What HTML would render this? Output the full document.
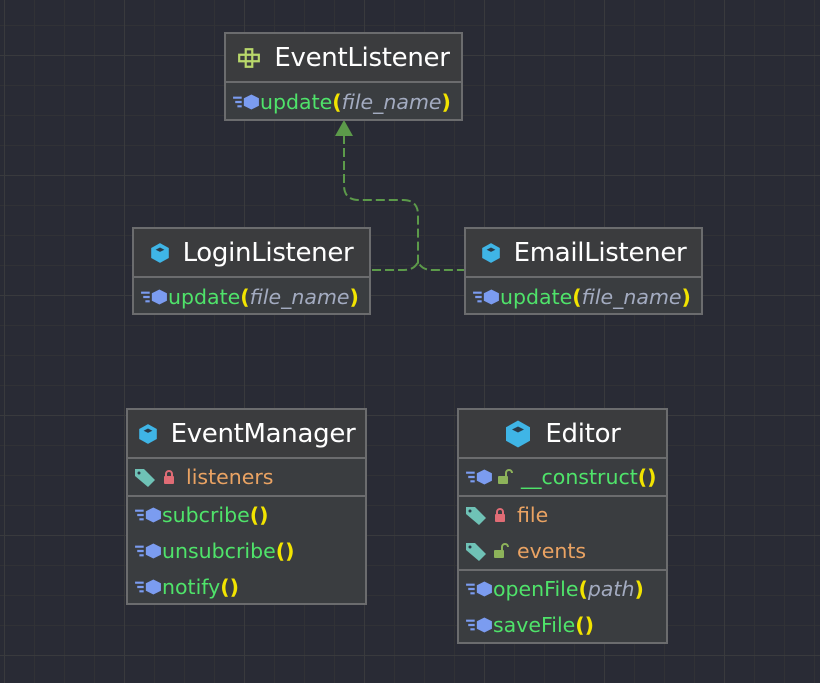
<!DOCTYPE html>
<html><head><meta charset="utf-8"><style>
body{margin:0;width:820px;height:683px;overflow:hidden;background:#292b35;
background-image:
linear-gradient(#393a3d 1px,transparent 1px),linear-gradient(90deg,#393a3d 1px,transparent 1px),
linear-gradient(#313236 1px,transparent 1px),linear-gradient(90deg,#313236 1px,transparent 1px);
background-size:120px 120px,120px 120px,30px 30px,30px 30px;
background-position:0 55px,4px 0,0 25px,4px 0;
font-family:"DejaVu Sans","Liberation Sans",sans-serif;position:relative}
.box{position:absolute;border:2px solid #6b6c6e;background:#3a3d40;box-sizing:border-box}
.hd{height:47px;border-bottom:2px solid #6b6c6e;background:#3b3c3e;color:#fff;font-size:26px;display:flex;align-items:center;justify-content:center;gap:13px;letter-spacing:-0.3px}
.row{height:36px;display:flex;align-items:center;padding-left:6px;font-size:20.5px;white-space:nowrap;letter-spacing:0px}
.sep{border-top:2px solid #6b6c6e}
.m{color:#4fe36a}.f{color:#eaa363}.p{color:#f2e400;font-weight:bold}.a{color:#a3abc0;font-style:italic}
svg{flex:none}
</style></head><body>
<svg width="820" height="683" style="position:absolute;left:0;top:0">
<path d="M344 135 V185 Q344 200 359 200 H403 Q418 200 418 215 V265" fill="none" stroke="#5c9a4a" stroke-width="2" stroke-dasharray="9 4"/>
<path d="M372 270 H404 Q414 270 418 262 Q422 270 432 270 H464" fill="none" stroke="#5c9a4a" stroke-width="2" stroke-dasharray="9 4"/>
<polygon points="344,120 335,136 353,136" fill="#5c9a4a"/>
</svg>

<div class="box" style="left:224px;top:32px;width:239px;height:89px">
<div class="hd"><svg width="24" height="20" viewBox="0 0 22 18"><path d="M8 1h6v5h6v6h-6v5H8v-5H2V6h6z M8 6h6v6H8z" fill="none" stroke="#b9d86b" stroke-width="2"/></svg>EventListener</div>
<div class="row" style="height:38px"><svg width="28" height="18" viewBox="0 0 26 16"><path d="M1 4h8M3 8h6M5 12h4" stroke="#7b9cf0" stroke-width="2"/><path d="M18 1l7 3.5v7L18 15l-7-3.5v-7z" fill="#7b9cf0"/></svg><span class="m">update</span><span class="p">(</span><span class="a">file_name</span><span class="p">)</span></div>
</div>

<div class="box" style="left:132px;top:227px;width:239px;height:88px">
<div class="hd"><svg width="20" height="22" viewBox="0 0 18 20"><path d="M9 1l8 4.5v9L9 19l-8-4.5v-9z" fill="#3fb5e6"/><path d="M5 7l4-2 4 2-4 2z" fill="#2a3a48"/></svg>LoginListener</div>
<div class="row" style="height:38px"><svg width="28" height="18" viewBox="0 0 26 16"><path d="M1 4h8M3 8h6M5 12h4" stroke="#7b9cf0" stroke-width="2"/><path d="M18 1l7 3.5v7L18 15l-7-3.5v-7z" fill="#7b9cf0"/></svg><span class="m">update</span><span class="p">(</span><span class="a">file_name</span><span class="p">)</span></div>
</div>

<div class="box" style="left:464px;top:227px;width:239px;height:88px">
<div class="hd"><svg width="20" height="22" viewBox="0 0 18 20"><path d="M9 1l8 4.5v9L9 19l-8-4.5v-9z" fill="#3fb5e6"/><path d="M5 7l4-2 4 2-4 2z" fill="#2a3a48"/></svg>EmailListener</div>
<div class="row" style="height:38px"><svg width="28" height="18" viewBox="0 0 26 16"><path d="M1 4h8M3 8h6M5 12h4" stroke="#7b9cf0" stroke-width="2"/><path d="M18 1l7 3.5v7L18 15l-7-3.5v-7z" fill="#7b9cf0"/></svg><span class="m">update</span><span class="p">(</span><span class="a">file_name</span><span class="p">)</span></div>
</div>

<div class="box" style="left:126px;top:408px;width:241px;height:197px">
<div class="hd"><svg width="20" height="22" viewBox="0 0 18 20"><path d="M9 1l8 4.5v9L9 19l-8-4.5v-9z" fill="#3fb5e6"/><path d="M5 7l4-2 4 2-4 2z" fill="#2a3a48"/></svg>EventManager</div>
<div class="row"><svg width="22" height="20" viewBox="0 0 22 20" style="margin-right:6px"><path d="M1 2h9l11 11-7 7L1 9z" fill="#6fc2b6"/><circle cx="5" cy="6" r="1.5" fill="#2a3a48"/></svg><svg width="14" height="16" viewBox="0 0 14 16" style="margin-right:10px"><path d="M4 7V5a3 3 0 016 0v2" stroke="#e06c75" stroke-width="2" fill="none"/><rect x="2" y="7" width="10" height="8" rx="1" fill="#e06c75"/></svg><span class="f">listeners</span></div>
<div class="sep"></div>
<div class="row"><svg width="28" height="18" viewBox="0 0 26 16"><path d="M1 4h8M3 8h6M5 12h4" stroke="#7b9cf0" stroke-width="2"/><path d="M18 1l7 3.5v7L18 15l-7-3.5v-7z" fill="#7b9cf0"/></svg><span class="m">subcribe</span><span class="p">()</span></div>
<div class="row"><svg width="28" height="18" viewBox="0 0 26 16"><path d="M1 4h8M3 8h6M5 12h4" stroke="#7b9cf0" stroke-width="2"/><path d="M18 1l7 3.5v7L18 15l-7-3.5v-7z" fill="#7b9cf0"/></svg><span class="m">unsubcribe</span><span class="p">()</span></div>
<div class="row"><svg width="28" height="18" viewBox="0 0 26 16"><path d="M1 4h8M3 8h6M5 12h4" stroke="#7b9cf0" stroke-width="2"/><path d="M18 1l7 3.5v7L18 15l-7-3.5v-7z" fill="#7b9cf0"/></svg><span class="m">notify</span><span class="p">()</span></div>
</div>

<div class="box" style="left:457px;top:408px;width:211px;height:236px">
<div class="hd"><svg width="28" height="30" viewBox="0 0 18 20"><path d="M9 1l8 4.5v9L9 19l-8-4.5v-9z" fill="#3fb5e6"/><path d="M5 7l4-2 4 2-4 2z" fill="#2a3a48"/></svg>Editor</div>
<div class="row"><svg width="28" height="18" viewBox="0 0 26 16"><path d="M1 4h8M3 8h6M5 12h4" stroke="#7b9cf0" stroke-width="2"/><path d="M18 1l7 3.5v7L18 15l-7-3.5v-7z" fill="#7b9cf0"/></svg><svg width="16" height="16" viewBox="0 0 16 16" style="margin:0 8px 0 4px"><path d="M9 7V4a3 3 0 016 0" stroke="#8db35a" stroke-width="2" fill="none"/><rect x="1" y="7" width="10" height="8" rx="1" fill="#8db35a"/></svg><span class="m">__construct</span><span class="p">()</span></div>
<div class="sep"></div>
<div class="row"><svg width="22" height="20" viewBox="0 0 22 20" style="margin-right:6px"><path d="M1 2h9l11 11-7 7L1 9z" fill="#6fc2b6"/><circle cx="5" cy="6" r="1.5" fill="#2a3a48"/></svg><svg width="14" height="16" viewBox="0 0 14 16" style="margin-right:10px"><path d="M4 7V5a3 3 0 016 0v2" stroke="#e06c75" stroke-width="2" fill="none"/><rect x="2" y="7" width="10" height="8" rx="1" fill="#e06c75"/></svg><span class="f">file</span></div>
<div class="row"><svg width="22" height="20" viewBox="0 0 22 20" style="margin-right:6px"><path d="M1 2h9l11 11-7 7L1 9z" fill="#6fc2b6"/><circle cx="5" cy="6" r="1.5" fill="#2a3a48"/></svg><svg width="16" height="16" viewBox="0 0 16 16" style="margin-right:8px"><path d="M9 7V4a3 3 0 016 0" stroke="#8db35a" stroke-width="2" fill="none"/><rect x="1" y="7" width="10" height="8" rx="1" fill="#8db35a"/></svg><span class="f">events</span></div>
<div class="sep"></div>
<div class="row"><svg width="28" height="18" viewBox="0 0 26 16"><path d="M1 4h8M3 8h6M5 12h4" stroke="#7b9cf0" stroke-width="2"/><path d="M18 1l7 3.5v7L18 15l-7-3.5v-7z" fill="#7b9cf0"/></svg><span class="m">openFile</span><span class="p">(</span><span class="a">path</span><span class="p">)</span></div>
<div class="row"><svg width="28" height="18" viewBox="0 0 26 16"><path d="M1 4h8M3 8h6M5 12h4" stroke="#7b9cf0" stroke-width="2"/><path d="M18 1l7 3.5v7L18 15l-7-3.5v-7z" fill="#7b9cf0"/></svg><span class="m">saveFile</span><span class="p">()</span></div>
</div>
</body></html>
